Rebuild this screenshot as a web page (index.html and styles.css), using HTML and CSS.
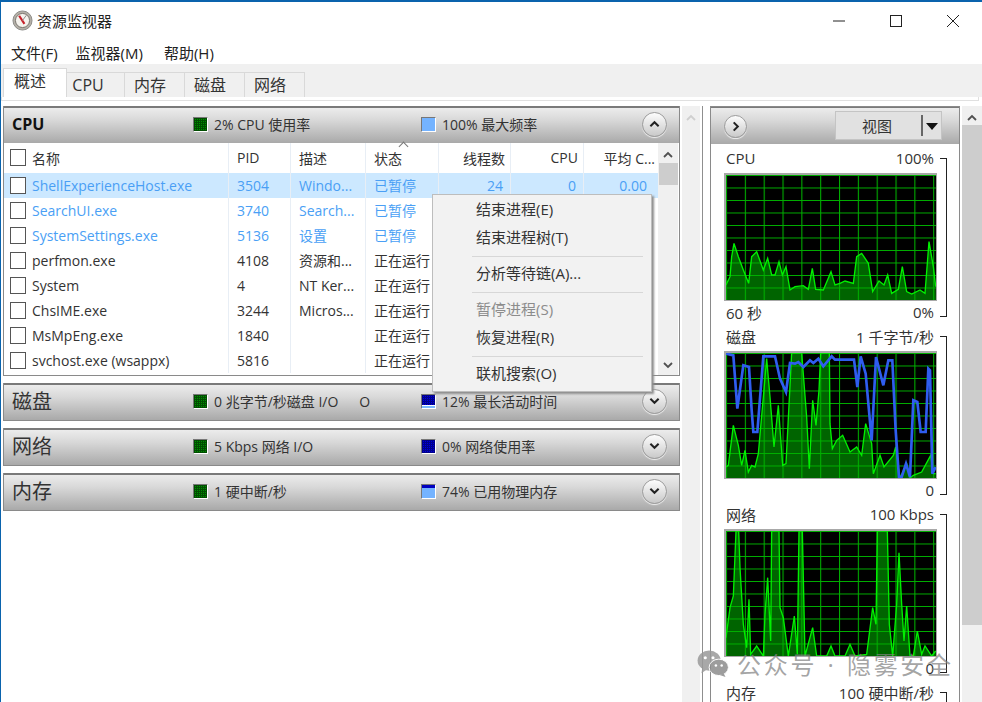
FILE: index.html
```html
<!DOCTYPE html>
<html lang="zh">
<head>
<meta charset="utf-8">
<title>资源监视器</title>
<link rel="stylesheet" href="styles.css">
</head>
<body>
<div class="window">
  <header class="titlebar">
    <svg class="appicon" viewBox="0 0 22 22"><circle cx="11" cy="11" r="10" fill="#b5b0a8" stroke="#8a8a86"/><circle cx="11" cy="11" r="7.4" fill="#f6f3ee" stroke="#77736c"/><path d="M7.5 6 L13 14.5" stroke="#c8202a" stroke-width="2.2" fill="none"/><path d="M11 11 L15 5.5" stroke="#888" stroke-width="1" fill="none"/></svg>
    <span class="titletext">资源监视器</span>
    <div class="winbtns">
      <svg viewBox="0 0 12 12" class="wb"><path d="M0 6H12" stroke="#222" stroke-width="1"/></svg>
      <svg viewBox="0 0 12 12" class="wb"><rect x=".5" y=".5" width="11" height="11" fill="none" stroke="#222"/></svg>
      <svg viewBox="0 0 12 12" class="wb"><path d="M0 0L12 12M12 0L0 12" stroke="#222" stroke-width="1"/></svg>
    </div>
  </header>
  <nav class="menubar"><span>文件(F)</span><span class="mid">监视器(M)</span><span>帮助(H)</span></nav>
  <div class="tabstrip">
    <div class="tab active">概述</div><div class="tab">CPU</div><div class="tab">内存</div><div class="tab">磁盘</div><div class="tab">网络</div>
  </div>
  <div class="tabline"></div>
  <main class="main">
    <section class="left">
      <div class="panel">
        <div class="sechead">
          <span class="sectitle bold">CPU</span>
          <span class="legend"><i class="sw green"></i>2% CPU 使用率</span>
          <span class="legend"><i class="sw light"></i>100% 最大频率</span>
          <span class="round"><svg viewBox="0 0 12 8"><path d="M1.5 6.5L6 2L10.5 6.5" fill="none" stroke="#222" stroke-width="2.2"/></svg></span>
        </div>
        <div class="tablewrap">
          <div class="table">
            <div class="row headrow"><div class="c name"><i class="cb"></i>名称</div><div class="c">PID</div><div class="c">描述</div><div class="c sorted">状态</div><div class="c r">线程数</div><div class="c r">CPU</div><div class="c r last">平均 C...</div></div>
            <div class="row sel susp"><div class="c name"><i class="cb"></i>ShellExperienceHost.exe</div><div class="c">3504</div><div class="c">Windo...</div><div class="c">已暂停</div><div class="c r">24</div><div class="c r">0</div><div class="c r last">0.00</div></div>
            <div class="row susp"><div class="c name"><i class="cb"></i>SearchUI.exe</div><div class="c">3740</div><div class="c">Search...</div><div class="c">已暂停</div><div class="c r"></div><div class="c r"></div><div class="c r last"></div></div>
            <div class="row susp"><div class="c name"><i class="cb"></i>SystemSettings.exe</div><div class="c">5136</div><div class="c">设置</div><div class="c">已暂停</div><div class="c r"></div><div class="c r"></div><div class="c r last"></div></div>
            <div class="row"><div class="c name"><i class="cb"></i>perfmon.exe</div><div class="c">4108</div><div class="c">资源和...</div><div class="c">正在运行</div><div class="c r"></div><div class="c r"></div><div class="c r last"></div></div>
            <div class="row"><div class="c name"><i class="cb"></i>System</div><div class="c">4</div><div class="c">NT Ker...</div><div class="c">正在运行</div><div class="c r"></div><div class="c r"></div><div class="c r last"></div></div>
            <div class="row"><div class="c name"><i class="cb"></i>ChsIME.exe</div><div class="c">3244</div><div class="c">Micros...</div><div class="c">正在运行</div><div class="c r"></div><div class="c r"></div><div class="c r last"></div></div>
            <div class="row"><div class="c name"><i class="cb"></i>MsMpEng.exe</div><div class="c">1840</div><div class="c"></div><div class="c">正在运行</div><div class="c r"></div><div class="c r"></div><div class="c r last"></div></div>
            <div class="row"><div class="c name"><i class="cb"></i>svchost.exe (wsappx)</div><div class="c">5816</div><div class="c"></div><div class="c">正在运行</div><div class="c r"></div><div class="c r"></div><div class="c r last"></div></div>
          </div>
          <div class="vscroll">
            <svg class="arr" viewBox="0 0 10 8"><path d="M1 6L5 2L9 6" fill="none" stroke="#505050" stroke-width="1.8"/></svg>
            <div class="thumb"></div>
            <svg class="arr down" viewBox="0 0 10 8"><path d="M1 2L5 6L9 2" fill="none" stroke="#505050" stroke-width="1.8"/></svg>
          </div>
        </div>
      </div>
      <div class="panel">
        <div class="sechead">
          <span class="sectitle">磁盘</span>
          <span class="legend"><i class="sw green"></i>0 兆字节/秒磁盘 I/O<em class="stray">O</em></span>
          <span class="legend"><i class="sw b12"></i>12% 最长活动时间</span>
          <span class="round"><svg viewBox="0 0 12 8"><path d="M1.5 1.5L6 6L10.5 1.5" fill="none" stroke="#222" stroke-width="2.2"/></svg></span>
        </div>
      </div>
      <div class="panel">
        <div class="sechead">
          <span class="sectitle">网络</span>
          <span class="legend"><i class="sw green"></i>5 Kbps 网络 I/O</span>
          <span class="legend"><i class="sw blue"></i>0% 网络使用率</span>
          <span class="round"><svg viewBox="0 0 12 8"><path d="M1.5 1.5L6 6L10.5 1.5" fill="none" stroke="#222" stroke-width="2.2"/></svg></span>
        </div>
      </div>
      <div class="panel">
        <div class="sechead">
          <span class="sectitle">内存</span>
          <span class="legend"><i class="sw green"></i>1 硬中断/秒</span>
          <span class="legend"><i class="sw mem"></i>74% 已用物理内存</span>
          <span class="round"><svg viewBox="0 0 12 8"><path d="M1.5 1.5L6 6L10.5 1.5" fill="none" stroke="#222" stroke-width="2.2"/></svg></span>
        </div>
      </div>
    </section>
    <div class="midscroll"><svg class="arr" viewBox="0 0 10 8"><path d="M1 6L5 2L9 6" fill="none" stroke="#cfcfcf" stroke-width="1.8"/></svg></div>
    <div class="splitter"></div>
    <section class="right">
      <div class="rhead">
        <span class="round small"><svg viewBox="0 0 8 12"><path d="M1.5 1.5L6 6L1.5 10.5" fill="none" stroke="#222" stroke-width="2.2"/></svg></span>
        <div class="viewbtn"><span class="viewlabel">视图</span><span class="viewsep"></span><span class="viewarrow"></span></div>
      </div>
      <div class="graphs">
        <div class="gblock cpu">
          <div class="glabels"><span>CPU</span><span>100%</span></div>
          <svg class="graph" viewBox="78 525 630 375" preserveAspectRatio="none">
            <defs>
              <pattern id="g1" x="78" y="525" width="56.5" height="37.5" patternUnits="userSpaceOnUse"><path d="M1.5 0V37.5M0 1.5H56.5" stroke="#00b000" stroke-width="3.4" fill="none"/></pattern>
              <pattern id="g2" x="78" y="68" width="56.5" height="37.5" patternUnits="userSpaceOnUse"><path d="M1.5 0V37.5M0 1.5H56.5" stroke="#00b000" stroke-width="3.4" fill="none"/></pattern>
              <pattern id="g3" x="78" y="600" width="56.5" height="37.5" patternUnits="userSpaceOnUse"><path d="M1.5 0V37.5M0 1.5H56.5" stroke="#00b000" stroke-width="3.4" fill="none"/></pattern>
            </defs>
            <rect x="78" y="525" width="630" height="375" fill="#000"/>
            <polygon class="area" points="78,900 78,855 90,830 95,770 102,730 115,770 130,810 146,850 155,770 170,755 190,810 203,775 215,825 225,825 237,785 247,825 258,800 270,870 285,860 310,857 325,868 337,805 347,868 370,870 393,815 405,855 420,850 435,843 460,850 470,770 485,760 505,790 518,875 537,843 552,855 563,825 575,880 595,868 607,800 620,875 635,882 660,870 675,880 687,725 700,800 707,860 708,900"/>
            <rect x="78" y="525" width="630" height="375" fill="url(#g1)"/>
            <polyline class="line" points="78,855 90,830 95,770 102,730 115,770 130,810 146,850 155,770 170,755 190,810 203,775 215,825 225,825 237,785 247,825 258,800 270,870 285,860 310,857 325,868 337,805 347,868 370,870 393,815 405,855 420,850 435,843 460,850 470,770 485,760 505,790 518,875 537,843 552,855 563,825 575,880 595,868 607,800 620,875 635,882 660,870 675,880 687,725 700,800 707,860"/>
          </svg>
          <div class="glabels bottom"><span>60 秒</span><span>0%</span></div>
          <i class="bracket"></i>
        </div>
        <div class="gblock disk">
          <div class="glabels"><span>磁盘</span><span>1 千字节/秒</span></div>
          <svg class="graph" viewBox="78 68 630 375" preserveAspectRatio="none">
            <rect x="78" y="68" width="630" height="375" fill="#000"/>
            <polygon class="area" points="78,443 78,410 85,405 100,285 115,345 125,405 135,360 145,425 155,405 165,410 175,370 190,200 200,85 210,200 222,350 235,225 248,405 258,400 275,68 305,68 320,260 328,415 338,210 348,285 357,180 362,68 388,68 390,280 397,355 410,330 428,315 450,365 470,350 485,375 497,280 515,340 520,430 540,375 552,410 580,375 587,350 600,443 620,400 630,443 640,435 665,425 692,375 700,430 707,430 708,443"/>
            <rect x="78" y="68" width="630" height="375" fill="url(#g2)"/>
            <polyline class="line" points="78,410 85,405 100,285 115,345 125,405 135,360 145,425 155,405 165,410 175,370 190,200 200,85 210,200 222,350 235,225 248,405 258,400 275,68 305,68 320,260 328,415 338,210 348,285 357,180 362,68 388,68 390,280 397,355 410,330 428,315 450,365 470,350 485,375 497,280 515,340 520,430 540,375 552,410 580,375 587,350 600,443 620,400 630,443 640,435 665,425 692,375 700,430 707,430"/>
            <polyline class="bline" points="78,70 100,75 112,235 130,105 147,110 155,240 160,305 172,305 190,78 225,78 240,145 258,185 270,98 285,100 295,95 310,110 330,90 340,98 355,85 370,108 395,78 405,88 462,88 472,170 482,78 497,130 515,330 528,80 550,165 565,90 577,90 587,300 597,443 605,440 618,400 630,440 640,210 652,215 662,305 677,305 685,115 690,120 697,430 707,410"/>
          </svg>
          <div class="glabels bottom"><span></span><span>0</span></div>
          <i class="bracket"></i>
        </div>
        <div class="gblock net">
          <div class="glabels"><span>网络</span><span>100 Kbps</span></div>
          <svg class="graph" viewBox="78 600 630 375" preserveAspectRatio="none">
            <rect x="78" y="600" width="630" height="375" fill="#000"/>
            <polygon class="area" points="78,975 78,920 90,830 100,795 108,600 116,600 120,710 130,880 140,950 147,805 152,970 170,945 190,975 195,850 203,740 212,930 215,600 237,600 240,830 250,860 265,975 283,855 292,970 297,600 307,600 315,975 338,890 350,975 380,975 393,945 405,975 435,975 450,940 465,975 500,970 518,830 528,880 532,600 562,600 568,880 578,975 590,820 597,665 605,820 612,930 620,825 630,975 640,975 652,900 665,970 675,945 695,975 707,960 708,975"/>
            <rect x="78" y="600" width="630" height="375" fill="url(#g3)"/>
            <polyline class="line" points="78,920 90,830 100,795 108,600 116,600 120,710 130,880 140,950 147,805 152,970 170,945 190,975 195,850 203,740 212,930 215,600 237,600 240,830 250,860 265,975 283,855 292,970 297,600 307,600 315,975 338,890 350,975 380,975 393,945 405,975 435,975 450,940 465,975 500,970 518,830 528,880 532,600 562,600 568,880 578,975 590,820 597,665 605,820 612,930 620,825 630,975 640,975 652,900 665,970 675,945 695,975 707,960"/>
          </svg>
          <div class="glabels bottom"><span></span><span>0</span></div>
          <i class="bracket"></i>
        </div>
        <div class="gblock mem">
          <div class="glabels"><span>内存</span><span>100 硬中断/秒</span></div>
          <i class="bracket"></i>
        </div>
      </div>
    </section>
    <div class="rscroll"><svg class="arr" viewBox="0 0 10 8"><path d="M1 6L5 2L9 6" fill="none" stroke="#505050" stroke-width="1.8"/></svg><div class="rthumb"></div></div>
  </main>
  <div class="ctxmenu">
    <div class="mi t1">结束进程(E)</div>
    <div class="mi">结束进程树(T)</div>
    <hr>
    <div class="mi">分析等待链(A)...</div>
    <hr>
    <div class="mi dis">暂停进程(S)</div>
    <div class="mi">恢复进程(R)</div>
    <hr>
    <div class="mi">联机搜索(O)</div>
  </div>
  <div class="watermark">
    <svg viewBox="0 0 32 28" class="wechat"><ellipse cx="12" cy="11" rx="12" ry="10.5" fill="#9a9a9a"/><path d="M5 18L4 24L10 20Z" fill="#9a9a9a"/><ellipse cx="22" cy="18" rx="10" ry="8.5" fill="#8d8d8d" stroke="#fff" stroke-width="1"/><path d="M27 24L29 28L23 26Z" fill="#8d8d8d"/><circle cx="8" cy="8" r="1.6" fill="#fff"/><circle cx="16" cy="8" r="1.6" fill="#fff"/><circle cx="19" cy="16" r="1.3" fill="#fff"/><circle cx="25" cy="16" r="1.3" fill="#fff"/></svg>
    <span>公众号 · 隐雾安全</span>
  </div>
</div>
</body>
</html>
```
FILE: styles.css
```css
* { box-sizing: border-box; }
html, body { margin: 0; padding: 0; height: 100%; overflow: hidden; background: #fff; }
body { font-family: "Open Sans", "Noto Sans CJK SC", sans-serif; font-size: 14px; color: #333; }
.window { position: relative; height: 702px; border-top: 2px solid #0a63ad; border-left: 1px solid #0a63ad; display: flex; flex-direction: column; overflow: hidden; }

.titlebar { height: 40px; display: flex; align-items: center; padding: 0 0 3px 11px; flex: none; }
.appicon { width: 21px; height: 21px; }
.titletext { margin-left: 4px; font-size: 15px; color: #222; }
.winbtns { margin-left: auto; display: flex; gap: 45px; padding-right: 23px; }
.wb { width: 12px; height: 12px; display: block; }

.menubar { height: 22px; display: flex; gap: 18px; padding: 0 0 2px 10px; align-items: center; flex: none; color: #222; font-size: 15px; }
.menubar .mid { margin-right: 3px; }
.tabstrip { height: 33px; background: #f0f0f0; display: flex; align-items: flex-end; padding-left: 2px; flex: none; }
.tab { width: 60px; height: 25px; border: 1px solid #d9d9d9; border-left: 0; border-bottom: 0; background: #f0f0f0; text-align: center; line-height: 24px; font-size: 16px; color: #333; padding-right: 9px; }
.tab.active { width: 64px; height: 29px; background: #fff; border-left: 1px solid #d9d9d9; line-height: 25px; padding-right: 10px; }
.tab:nth-child(2) { width: 58px; padding-right: 15px; }
.tabline { height: 4px; margin-right: 3px; background: #fff; border: 1px solid #e0e0e0; border-top: 0; flex: none; }

.main { flex: 1; display: flex; padding-top: 5px; min-height: 0; }
.left { width: 677px; margin-left: 2px; display: flex; flex-direction: column; gap: 7px; flex: none; }
.panel { border: 1px solid #8a8a8a; border-top: 0; background: #fff; }
.sechead { height: 37px; display: flex; align-items: center; position: relative; padding: 0 0 2px 8px; background: linear-gradient(#ececec 0%, #d8d8d8 35%, #a9a9a9 100%); border-top: 2px solid #7a7a7a; color: #333; }
.sectitle { width: 181px; font-size: 20px; color: #333; line-height: 1; padding-top: 1px; }
.sectitle.bold { font-size: 16px; font-weight: 700; color: #111; padding: 0 0 2px; }
.legend { width: 228px; display: flex; align-items: center; font-size: 14px; white-space: pre; line-height: 17px; }
.stray { font-style: normal; margin-left: 21px; }
.sw { width: 15px; height: 15px; margin-right: 6px; border-left: 1px solid #777; border-top: 1px solid #777; border-right: 1px solid #fff; border-bottom: 1px solid #fff; flex: none; }
.sw.green { background: repeating-linear-gradient(0deg, #004d00 0 1px, transparent 1px 2px), repeating-linear-gradient(90deg, #004d00 0 1px, #009000 1px 2px); }
.sw.blue { background: repeating-linear-gradient(0deg, #00008a 0 1px, transparent 1px 2px), repeating-linear-gradient(90deg, #00008a 0 1px, #0000e0 1px 2px); }
.sw.b12 { background: linear-gradient(transparent 80%, #fff 80%, #fff 86%, #7ab8ff 86%), repeating-linear-gradient(0deg, #00008a 0 1px, transparent 1px 2px), repeating-linear-gradient(90deg, #00008a 0 1px, #0000e0 1px 2px); }
.sw.light { background: #74b3ff; }
.sw.mem { background: linear-gradient(#0000c0 26%, #74b3ff 26%); }
.round { position: absolute; right: 12px; top: 50%; width: 25px; height: 25px; margin-top: -14px; border-radius: 50%; background: linear-gradient(#fdfdfd, #c9c9c9); border: 1px solid #9c9c9c; box-shadow: 0 1px 1px #eee; display: flex; align-items: center; justify-content: center; }
.round svg { width: 11px; height: 8px; }
.round.small { position: static; margin: 0; flex: none; width: 23px; height: 23px; }
.round.small svg { width: 8px; height: 11px; }

.tablewrap { display: flex; height: 232px; }
.table { width: 654px; flex: none; }
.row { display: grid; grid-template-columns: 225px 62px 75px 73px 72px 73px 74px; height: 25px; align-items: stretch; }
.headrow { height: 30px; }
.c { display: flex; align-items: center; padding-left: 8px; border-right: 1px solid #e8eef5; white-space: pre; overflow: hidden; padding-bottom: 1px; }
.c.name { padding-left: 6px; }
.c.r { justify-content: flex-end; padding: 0 7px 1px 0; }
.c.last { border-right: 0; padding-right: 11px; }
.headrow .c.r { padding-right: 5px; }
.headrow .c.last { padding-right: 3px; }
.sorted { position: relative; overflow: visible; }
.sorted::before { content: ""; position: absolute; left: 34px; top: 0; width: 6px; height: 6px; border-left: 1px solid #777; border-top: 1px solid #777; transform: rotate(45deg); }
.cb { width: 16px; height: 17px; border: 1.5px solid #555; background: #fff; margin-right: 6px; flex: none; }
.sel { background: #cce8ff; }
.susp .c { color: #4a9ff5; }
.vscroll { width: 20px; background: #f0f0f0; display: flex; flex-direction: column; align-items: center; position: relative; flex: none; }
.arr { width: 10px; height: 8px; margin-top: 8px; flex: none; }
.thumb { width: 19px; height: 22px; margin-top: 4px; background: #cdcdcd; }
.vscroll .down { position: absolute; bottom: 6px; }

.midscroll { width: 18px; margin-left: 2px; background: #f0f0f0; display: flex; justify-content: center; flex: none; }
.splitter { width: 1px; margin-left: 2px; background: #8f8f8f; flex: none; }
.right { width: 250px; margin-left: 7px; border: 1px solid #8a8a8a; border-bottom: 0; flex: none; }
.rhead { height: 37px; border-top: 1px solid #7a7a7a; display: flex; align-items: center; justify-content: space-between; padding: 0 17px 0 13px; background: linear-gradient(#ececec 0%, #d8d8d8 35%, #a9a9a9 100%); }
.viewbtn { width: 107px; height: 29px; background: #e1e1e1; border: 1px solid #c4c4c4; display: flex; align-items: center; position: relative; margin-top: -2px; }
.viewlabel { margin-left: 26px; font-size: 15px; color: #333; }
.viewsep { position: absolute; right: 18px; top: 3px; bottom: 3px; width: 2px; background: #666; }
.viewarrow { position: absolute; right: 3px; top: 11px; border-left: 6px solid transparent; border-right: 6px solid transparent; border-top: 7px solid #111; }
.graphs { padding: 9px 0 0 13px; display: flex; flex-direction: column; gap: 6px; position: relative; }
.gblock { position: relative; width: 213px; }
.glabels { display: flex; justify-content: space-between; height: 20px; padding: 0 3px 10px 2px; font-size: 15px; color: #333; align-items: center; white-space: pre; }
.glabels.bottom { height: 24px; padding: 0 3px 2px 2px; }
.graph { display: block; width: 213px; height: 128px; padding: 2px 1px 1px 2px; background: #a8a8a8; }
.area { fill: #006400; }
.line { fill: none; stroke: #00f000; stroke-width: 4; }
.bline { fill: none; stroke: #2f5df0; stroke-width: 8; }
.bracket { position: absolute; left: 216px; top: 5px; bottom: 8px; width: 7px; border: 1px solid #222; border-left: 0; }
.gblock.mem .bracket { bottom: -30px; }

.rscroll { width: 20px; margin-left: 2px; background: #f0f0f0; display: flex; flex-direction: column; align-items: center; flex: none; }
.rthumb { width: 20px; height: 500px; margin-top: 3px; background: #cdcdcd; }

.ctxmenu { position: absolute; left: 431px; top: 192px; width: 220px; height: 198px; background: #f2f2f2; border: 1px solid #bdbdbd; box-shadow: 2px 2px 2px #8e8e8e; padding-top: 1px; }
.mi { height: 28px; line-height: 27px; padding-left: 43px; color: #333; font-size: 15px; }
.mi.dis { color: #8c8c8c; }
.ctxmenu hr { margin: 4px 8px 3px 39px; border: 0; border-top: 1px solid #d7d7d7; height: 1px; }

.watermark { position: absolute; left: 696px; top: 644px; display: flex; align-items: center; gap: 8px; color: rgba(130,130,130,.72); font-size: 24px; letter-spacing: 2.7px; word-spacing: 1.5px; white-space: pre; }
.wechat { width: 32px; height: 27px; opacity: .85; }
```
